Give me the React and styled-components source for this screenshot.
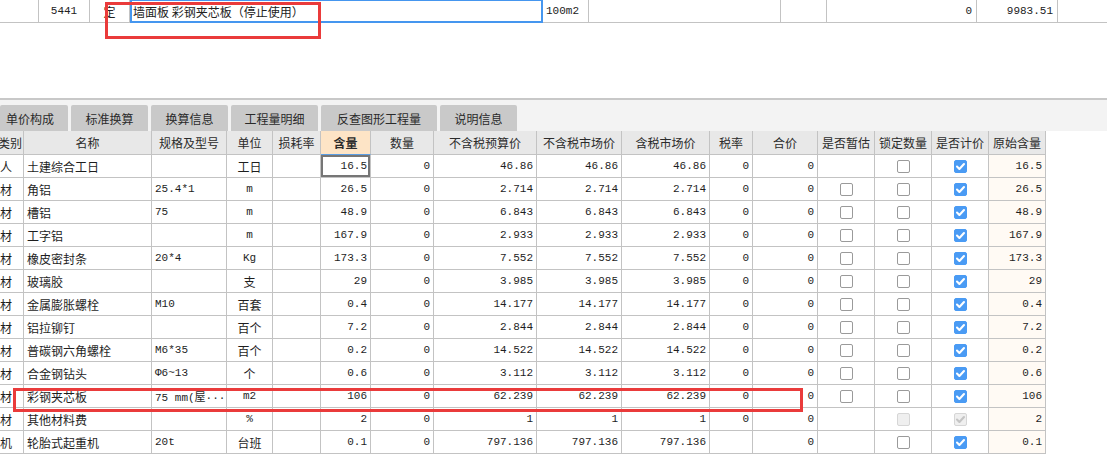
import React from 'react';
import styled, { createGlobalStyle, css } from 'styled-components';

const Global = createGlobalStyle`
  html, body { margin: 0; padding: 0; background: #fff; }
  body { font-family: "Noto Sans CJK SC", sans-serif; font-size: 12px; color: #222; }
`;

const LINE = '#c3c3c3';
const MONO = '"Liberation Mono", "Noto Sans CJK SC", monospace';
const CJK = '"Noto Sans CJK SC", "Microsoft YaHei", sans-serif';

const Page = styled.div`
  position: relative;
  width: 1107px;
  height: 465px;
  overflow: hidden;
  background: #fff;
  display: flex;
  flex-direction: column;
`;

/* ---------- upper grid ---------- */
const UpperRow = styled.div`
  display: grid;
  grid-template-columns: 39px 51px 40px 413px 46px 192px 46px 150px 81px 1fr;
  height: 23px;
  flex: none;
`;

const UCell = styled.div`
  box-sizing: border-box;
  height: 23px;
  border-bottom: 1px solid ${LINE};
  border-right: ${p => (p.$last ? 'none' : `1px solid ${LINE}`)};
  display: flex;
  align-items: center;
  justify-content: ${p => (p.$align === 'right' ? 'flex-end' : p.$align === 'center' ? 'center' : 'flex-start')};
  padding: 0 ${p => (p.$align === 'right' ? '4px' : '0')} 0 ${p => (p.$align === 'left' ? '3px' : '0')};
  font-family: ${p => (p.$mono ? MONO : CJK)};
  font-size: ${p => (p.$mono ? '11px' : '12px')};
  white-space: nowrap;
  overflow: hidden;
`;

const EditCell = styled.div`
  box-sizing: border-box;
  height: 23px;
  border: 2px solid #4596ef;
  border-top-width: 1px;
  display: flex;
  align-items: center;
  padding-left: 1px;
  font-family: ${CJK};
  font-size: 12px;
  white-space: nowrap;
  overflow: hidden;
  background: #fff;
`;

const Spacer = styled.div`
  flex: none;
  height: 75px;
`;

/* ---------- tabs ---------- */
const TabBar = styled.div`
  flex: none;
  box-sizing: border-box;
  height: 33px;
  border-top: 2px solid #c8c8c8;
  background: #f3f3f3;
  display: flex;
  align-items: flex-end;
  gap: 3px;
`;

const Tab = styled.div`
  box-sizing: border-box;
  width: ${p => p.$w}px;
  height: 26px;
  background: #c9c9c9;
  border-radius: 2px 2px 0 0;
  display: flex;
  align-items: center;
  justify-content: ${p => (p.$clip ? 'flex-end' : 'center')};
  padding-right: ${p => (p.$clip ? '14px' : '0')};
  font-family: ${CJK};
  font-size: 12px;
  color: #2a2a2a;
`;

/* ---------- lower table ---------- */
const COLS = '24px 128px 75px 46px 48px 50px 63px 103px 85px 88px 43px 65px 57px 57px 57px 57px';

const Table = styled.div`
  flex: none;
  display: flex;
  flex-direction: column;
  width: 1046px;
`;

const HeadRow = styled.div`
  display: grid;
  grid-template-columns: ${COLS};
  height: 24px;
`;

const Row = styled.div`
  display: grid;
  grid-template-columns: ${COLS};
  height: 23px;
`;

const Head = styled.div`
  box-sizing: border-box;
  height: 24px;
  background: ${p => (p.$active ? '#fde4c6' : '#e8e8e8')};
  border-right: 1px solid ${LINE};
  border-bottom: 1px solid ${p => (p.$active ? '#5a9ee6' : LINE)};
  display: flex;
  align-items: center;
  justify-content: ${p => (p.$clip ? 'flex-end' : 'center')};
  padding-right: ${p => (p.$clip ? '1px' : '0')};
  font-family: ${CJK};
  font-size: 12px;
  font-weight: ${p => (p.$active ? 700 : 400)};
  color: #2b2b2b;
  white-space: nowrap;
  overflow: hidden;
`;

const Cell = styled.div`
  box-sizing: border-box;
  height: 23px;
  border-right: 1px solid ${LINE};
  border-bottom: 1px solid ${LINE};
  display: flex;
  align-items: center;
  justify-content: ${p => (p.$align === 'right' ? 'flex-end' : p.$align === 'center' ? 'center' : 'flex-start')};
  padding: 0 ${p => (p.$align === 'right' ? '3px' : '0')} 0 ${p => (p.$align === 'left' ? (p.$flush ? '0' : '3px') : '0')};
  background: ${p => (p.$tint ? '#fffaf4' : '#fff')};
  font-family: ${p => (p.$mono ? MONO : CJK)};
  font-size: ${p => (p.$mono ? '11px' : '12px')};
  color: #1e1e1e;
  white-space: nowrap;
  overflow: hidden;
  ${p =>
    p.$selected &&
    css`
      box-shadow: inset 0 0 0 2px #767676;
    `}
`;

const Box = styled.span`
  box-sizing: border-box;
  width: 13px;
  height: 13px;
  border-radius: 2px;
  display: inline-flex;
  align-items: center;
  justify-content: center;
  ${p => {
    switch (p.$state) {
      case 'on':
        return css`background: #4a9bf4; border: 1px solid #4a9bf4;`;
      case 'dis':
      case 'disOn':
        return css`background: #efefef; border: 1px solid #d6d6d6;`;
      default:
        return css`background: #fff; border: 1px solid #9a9a9a;`;
    }
  }}
`;

const Check = ({ state }) => {
  if (!state) return null;
  const mark = state === 'on' || state === 'disOn';
  return (
    <Box $state={state}>
      {mark && (
        <svg width="11" height="11" viewBox="0 0 11 11">
          <polyline
            points="2,5.6 4.4,8 9,3"
            fill="none"
            stroke={state === 'on' ? '#fff' : '#c4c4c4'}
            strokeWidth="2.1"
            strokeLinecap="round"
            strokeLinejoin="round"
          />
        </svg>
      )}
    </Box>
  );
};

const Mark = styled.div`
  position: absolute;
  box-sizing: border-box;
  border: 3px solid #ea3b3b;
  left: ${p => p.$x}px;
  top: ${p => p.$y}px;
  width: ${p => p.$w}px;
  height: ${p => p.$h}px;
  pointer-events: none;
`;

const rows = [
  { cat: '人', name: '土建综合工日', spec: '', unit: '工日', qty: '16.5', price: '46.86', tax: '0', est: null, lock: 'off', calc: 'on', sel: true },
  { cat: '材', name: '角铝', spec: '25.4*1', unit: 'm', qty: '26.5', price: '2.714', tax: '0', est: 'off', lock: 'off', calc: 'on' },
  { cat: '材', name: '槽铝', spec: '75', unit: 'm', qty: '48.9', price: '6.843', tax: '0', est: 'off', lock: 'off', calc: 'on' },
  { cat: '材', name: '工字铝', spec: '', unit: 'm', qty: '167.9', price: '2.933', tax: '0', est: 'off', lock: 'off', calc: 'on' },
  { cat: '材', name: '橡皮密封条', spec: '20*4', unit: 'Kg', qty: '173.3', price: '7.552', tax: '0', est: 'off', lock: 'off', calc: 'on' },
  { cat: '材', name: '玻璃胶', spec: '', unit: '支', qty: '29', price: '3.985', tax: '0', est: 'off', lock: 'off', calc: 'on' },
  { cat: '材', name: '金属膨胀螺栓', spec: 'M10', unit: '百套', qty: '0.4', price: '14.177', tax: '0', est: 'off', lock: 'off', calc: 'on' },
  { cat: '材', name: '铝拉铆钉', spec: '', unit: '百个', qty: '7.2', price: '2.844', tax: '0', est: 'off', lock: 'off', calc: 'on' },
  { cat: '材', name: '普碳钢六角螺栓', spec: 'M6*35', unit: '百个', qty: '0.2', price: '14.522', tax: '0', est: 'off', lock: 'off', calc: 'on' },
  { cat: '材', name: '合金钢钻头', spec: 'Φ6~13', unit: '个', qty: '0.6', price: '3.112', tax: '0', est: 'off', lock: 'off', calc: 'on' },
  { cat: '材', name: '彩钢夹芯板', spec: '75 mm(屋···', unit: 'm2', qty: '106', price: '62.239', tax: '0', est: 'off', lock: 'off', calc: 'on' },
  { cat: '材', name: '其他材料费', spec: '', unit: '%', qty: '2', price: '1', tax: '0', est: null, lock: 'dis', calc: 'disOn' },
  { cat: '机', name: '轮胎式起重机', spec: '20t', unit: '台班', qty: '0.1', price: '797.136', tax: '', est: null, lock: 'off', calc: 'on' },
];

const headers = ['类别', '名称', '规格及型号', '单位', '损耗率', '含量', '数量', '不含税预算价', '不含税市场价', '含税市场价', '税率', '合价', '是否暂估', '锁定数量', '是否计价', '原始含量'];

const tabs = [
  { label: '单价构成', w: 68, clip: true },
  { label: '标准换算', w: 77 },
  { label: '换算信息', w: 77 },
  { label: '工程量明细', w: 87 },
  { label: '反查图形工程量', w: 116 },
  { label: '说明信息', w: 77 },
];

const isAscii = s => /^[\x00-\x7F]*$/.test(s);

export default function App() {
  return (
    <Page>
      <Global />
      <UpperRow>
        <UCell />
        <UCell $align="center" $mono>5441</UCell>
        <UCell $align="center">定</UCell>
        <EditCell>墙面板 彩钢夹芯板（停止使用）</EditCell>
        <UCell $align="left" $mono>100m2</UCell>
        <UCell />
        <UCell />
        <UCell $align="right" $mono>0</UCell>
        <UCell $align="right" $mono>9983.51</UCell>
        <UCell $last />
      </UpperRow>
      <Spacer />
      <TabBar>
        {tabs.map(t => (
          <Tab key={t.label} $w={t.w} $clip={t.clip}>{t.label}</Tab>
        ))}
      </TabBar>
      <Table>
        <HeadRow>
          {headers.map((h, i) => (
            <Head key={h} $clip={i === 0} $active={h === '含量'}>{h}</Head>
          ))}
        </HeadRow>
        {rows.map((r, i) => (
          <Row key={i}>
            <Cell $align="left" $flush>{r.cat}</Cell>
            <Cell $align="left">{r.name}</Cell>
            <Cell $align="left" $mono>{r.spec}</Cell>
            <Cell $align="center" $mono={isAscii(r.unit)}>{r.unit}</Cell>
            <Cell />
            <Cell $align="right" $mono $selected={r.sel}>{r.qty}</Cell>
            <Cell $align="right" $mono>0</Cell>
            <Cell $align="right" $mono>{r.price}</Cell>
            <Cell $align="right" $mono>{r.price}</Cell>
            <Cell $align="right" $mono>{r.price}</Cell>
            <Cell $align="right" $mono>{r.tax}</Cell>
            <Cell $align="right" $mono>0</Cell>
            <Cell $align="center"><Check state={r.est} /></Cell>
            <Cell $align="center"><Check state={r.lock} /></Cell>
            <Cell $align="center"><Check state={r.calc} /></Cell>
            <Cell $align="right" $mono $tint>{r.qty}</Cell>
          </Row>
        ))}
      </Table>
      <Mark $x={105} $y={2} $w={216} $h={37} />
      <Mark $x={13} $y={388} $w={790} $h={24} />
    </Page>
  );
}
